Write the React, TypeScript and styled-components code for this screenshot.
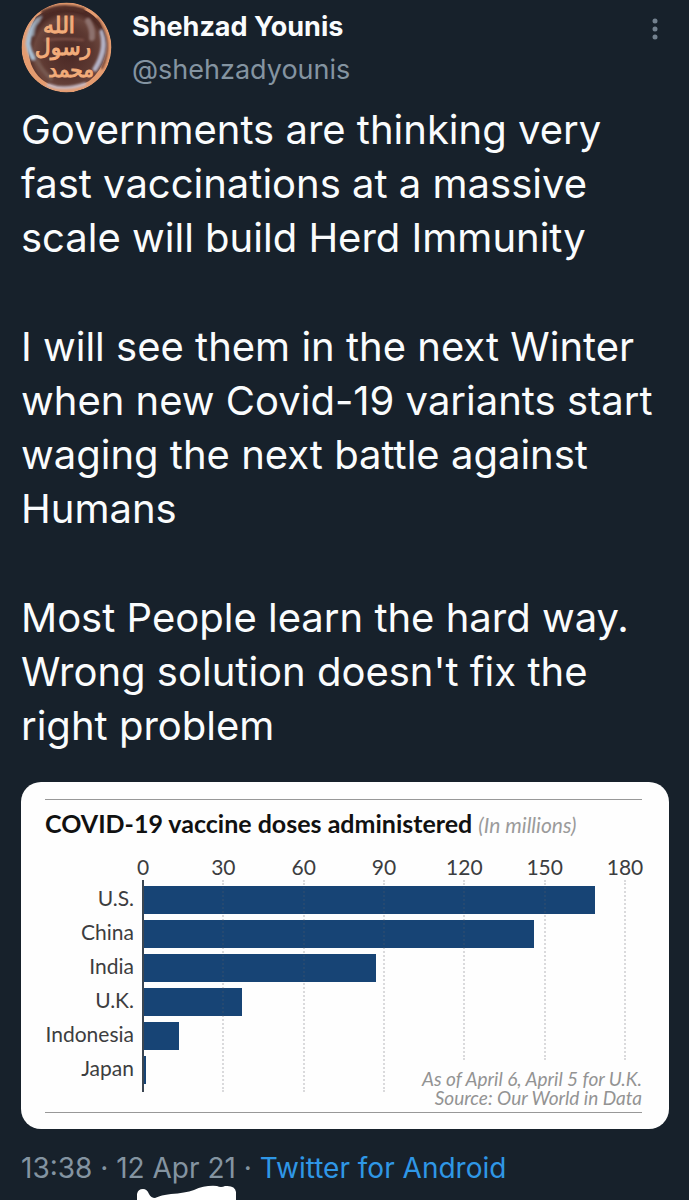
import React from "react";
import styled, { createGlobalStyle } from "styled-components";

const GlobalStyle = createGlobalStyle`
  *, *::before, *::after { box-sizing: border-box; }
  body {
    margin: 0;
    background: #17212b;
    font-family: Inter, "Liberation Sans", sans-serif;
  }
`;

const Tweet = styled.article`
  padding: 2px 20px 0 21px;
  color: #fafcfd;
`;

const Header = styled.header`
  display: flex;
  align-items: flex-start;
  gap: 20px;
`;

const Avatar = styled.svg`
  flex: none;
  display: block;
  width: 91px;
  height: 91px;
`;

const Author = styled.div`
  flex: 1;
  display: flex;
  flex-direction: column;
  gap: 10px;
  padding-top: 8px;
  line-height: 33px;
  font-size: 27px;
`;

const Name = styled.strong`
  font-weight: 700;
`;

const Handle = styled.a`
  color: #8494a1;
  text-decoration: none;
`;

const MenuButton = styled.button`
  display: flex;
  padding: 16px 11px;
  border: 0;
  background: none;
  color: #73818e;
`;

const Body = styled.div`
  display: flex;
  flex-direction: column;
  gap: 55px;
  margin-top: 10px;
  font-size: 40px;
  line-height: 54px;
`;

const Paragraph = styled.p`
  margin: 0;
`;

const Card = styled.figure`
  margin: 29px 0 0;
  padding: 17px 27px 16px 24px;
  border-radius: 20px;
  background: #fefefe;
  color: #3c3d40;
  font-family: Lato, "Liberation Sans", sans-serif;
`;

const Chart = styled.div`
  padding: 8px 0 5px;
  border-top: 1px solid #989898;
  border-bottom: 1px solid #989898;
`;

const ChartTitle = styled.h2`
  margin: 0 0 15px;
  font-size: 25px;
  font-weight: 700;
  line-height: 30px;
  color: #111;
`;

const Unit = styled.em`
  font-size: 21px;
  font-weight: 400;
  color: #9b9b9b;
`;

const ChartGrid = styled.div`
  display: grid;
  grid-template-columns: 89px minmax(0, 1fr) 17px;
  grid-template-rows: 25px 212px 15px;
`;

const Ticks = styled.div`
  grid-area: 1 / 2;
  display: flex;
  justify-content: space-between;
  margin-left: 9px;
  font-size: 21px;
  line-height: 24px;
`;

const Tick = styled.span`
  display: flex;
  justify-content: center;
  width: 0;
`;

const Labels = styled.ul`
  grid-area: 2 / 1;
  margin: 0;
  padding: 1px 0 0;
  list-style: none;
  text-align: right;
  font-size: 21px;
  line-height: 34px;
`;

const Bars = styled.div`
  grid-area: 2 / 2;
  display: flex;
  flex-direction: column;
  gap: 6px;
  margin-left: 9px;
  padding-top: 6px;
`;

const Bar = styled.div`
  height: 28px;
  background: #174475;
`;

const Lines = styled.div`
  grid-area: 2 / 2;
  display: flex;
  justify-content: space-between;
  margin-left: 8px;
  padding-right: 1px;
`;

const Line = styled.i<{ $kind: "axis" | "long" | "short" }>`
  width: 0;
  height: ${(p) => (p.$kind === "short" ? "180px" : "212px")};
  border-left: ${(p) => (p.$kind === "axis" ? "2px solid #3b4652" : "2px dotted rgba(90, 90, 100, 0.22)")};
  margin-right: -2px;
`;

const Note = styled.figcaption`
  grid-area: 2 / 1 / 4 / 4;
  align-self: end;
  text-align: right;
  font-size: 19px;
  font-style: italic;
  line-height: 19px;
  color: #939393;
`;

const Meta = styled.footer`
  margin-top: 22px;
  font-size: 28px;
  line-height: 34px;
  color: #8494a1;
`;

const SourceLink = styled.a`
  color: #2f97e6;
  text-decoration: none;
`;

const Scribble = styled.svg`
  display: block;
  width: 100px;
  height: 15px;
  margin-left: 116px;
`;

const data = [
  { country: "U.S.", doses: 168.8 },
  { country: "China", doses: 146 },
  { country: "India", doses: 87 },
  { country: "U.K.", doses: 37 },
  { country: "Indonesia", doses: 13.4 },
  { country: "Japan", doses: 1.3 },
];
const ticks = [0, 30, 60, 90, 120, 150, 180];

const lineKind = (t: number) => (t === 0 ? "axis" : t > 90 ? "short" : "long");

function SealAvatar() {
  return (
    <Avatar viewBox="0 0 91 91" role="img" aria-label="Profile picture">
      <defs>
        <radialGradient id="copper" cx="52%" cy="58%" r="52%">
          <stop offset="0" stopColor="#4b2925" />
          <stop offset="0.6" stopColor="#5c3831" />
          <stop offset="0.85" stopColor="#6b463d" />
          <stop offset="1" stopColor="#4c2a25" />
        </radialGradient>
        <filter id="soft" x="-20%" y="-20%" width="140%" height="140%">
          <feGaussianBlur stdDeviation="1.3" />
        </filter>
        <clipPath id="disc"><circle cx="45.500" cy="45.500" r="45" /></clipPath>
      </defs>
      <g clipPath="url(#disc)">
        <circle cx="45.500" cy="45.500" r="45" fill="#e59c70" />
        <path d="M15 15Q29 4 47 5Q68 5 79 21Q88 36 84 54Q80 70 68 79Q53 88 36 85Q17 80 10 62Q2 35 15 15Z" fill="url(#copper)" />
        <g filter="url(#soft)" fill="none" strokeLinecap="round">
          <path d="M17 18Q8 27 7 42Q8 49 12 56" stroke="#a9bdd0" strokeWidth="5" />
          <path d="M20 15Q13 22 12 33" stroke="#8a8f9a" strokeWidth="3" />
          <path d="M81 30Q86 48 74 67" stroke="#b4b2c6" strokeWidth="5" />
          <path d="M76 17Q93 40 81 66" stroke="#5a322a" strokeWidth="2" />
          <path d="M22 10Q42 1 62 8" stroke="#56322a" strokeWidth="4" />
          <path d="M27 83Q43 89 64 82" stroke="#c4b8c2" strokeWidth="3" />
          <path d="M67 19Q72 27 71 36" stroke="#8d716d" strokeWidth="6" />
          <path d="M24 38Q45 36 62 38" stroke="#805249" strokeWidth="2" />
          <path d="M16 59Q21 69 30 77" stroke="#76584f" strokeWidth="4" />
        </g>
        <g
          fill="#f2ac7a"
          stroke="#f2ac7a"
          strokeWidth="1"
          textAnchor="middle"
          direction="rtl"
          fontFamily='"DejaVu Sans", sans-serif'
        >
          <text x="38" y="31" fontSize="22">الله</text>
          <text x="42" y="53" fontSize="22">رسول</text>
          <text x="50" y="75" fontSize="20">محمد</text>
        </g>
      </g>
    </Avatar>
  );
}

export default function App() {
  return (
    <>
      <GlobalStyle />
      <Tweet>
        <Header>
          <SealAvatar />
          <Author>
            <Name>Shehzad Younis</Name>
            <Handle href="#profile">@shehzadyounis</Handle>
          </Author>
          <MenuButton type="button" aria-label="More options">
            <svg width="6" height="22" viewBox="0 0 6 22" fill="currentColor">
              <circle cx="3" cy="3" r="2.500" />
              <circle cx="3" cy="11" r="2.500" />
              <circle cx="3" cy="19" r="2.500" />
            </svg>
          </MenuButton>
        </Header>

        <Body>
          <Paragraph>
            Governments are thinking very fast vaccinations at a massive scale will build Herd Immunity
          </Paragraph>
          <Paragraph>
            I will see them in the next Winter when new Covid-19 variants start waging the next battle
            against Humans
          </Paragraph>
          <Paragraph>
            Most People learn the hard way. Wrong solution doesn't fix the right problem
          </Paragraph>
        </Body>

        <Card>
          <Chart>
            <ChartTitle>
              COVID-19 vaccine doses administered <Unit>(In millions)</Unit>
            </ChartTitle>
            <ChartGrid>
              <Ticks>
                {ticks.map((t) => (
                  <Tick key={t}>{t}</Tick>
                ))}
              </Ticks>
              <Labels>
                {data.map((d) => (
                  <li key={d.country}>{d.country}</li>
                ))}
              </Labels>
              <Bars>
                {data.map((d) => (
                  <Bar key={d.country} style={{ width: `${(d.doses / 180) * 100}%` }} />
                ))}
              </Bars>
              <Lines>
                {ticks.map((t) => (
                  <Line key={t} $kind={lineKind(t)} />
                ))}
              </Lines>
              <Note>
                As of April 6, April 5 for U.K.
                <br />
                Source: Our World in Data
              </Note>
            </ChartGrid>
          </Chart>
        </Card>

        <Meta>
          <time dateTime="2021-04-12T13:38">13:38 · 12 Apr 21</time> ·{" "}
          <SourceLink href="#source">Twitter for Android</SourceLink>
        </Meta>
        <Scribble viewBox="0 0 100 15" aria-hidden="true">
          <path
            d="M0 15V9Q1 4 6 4Q10 4 12 9Q14 13 18 13Q24 10 34 9Q48 8 57 5Q68 0 80 1Q84 3 88 1Q98 0 99 7V15Z"
            fill="#fff"
          />
        </Scribble>
      </Tweet>
    </>
  );
}
